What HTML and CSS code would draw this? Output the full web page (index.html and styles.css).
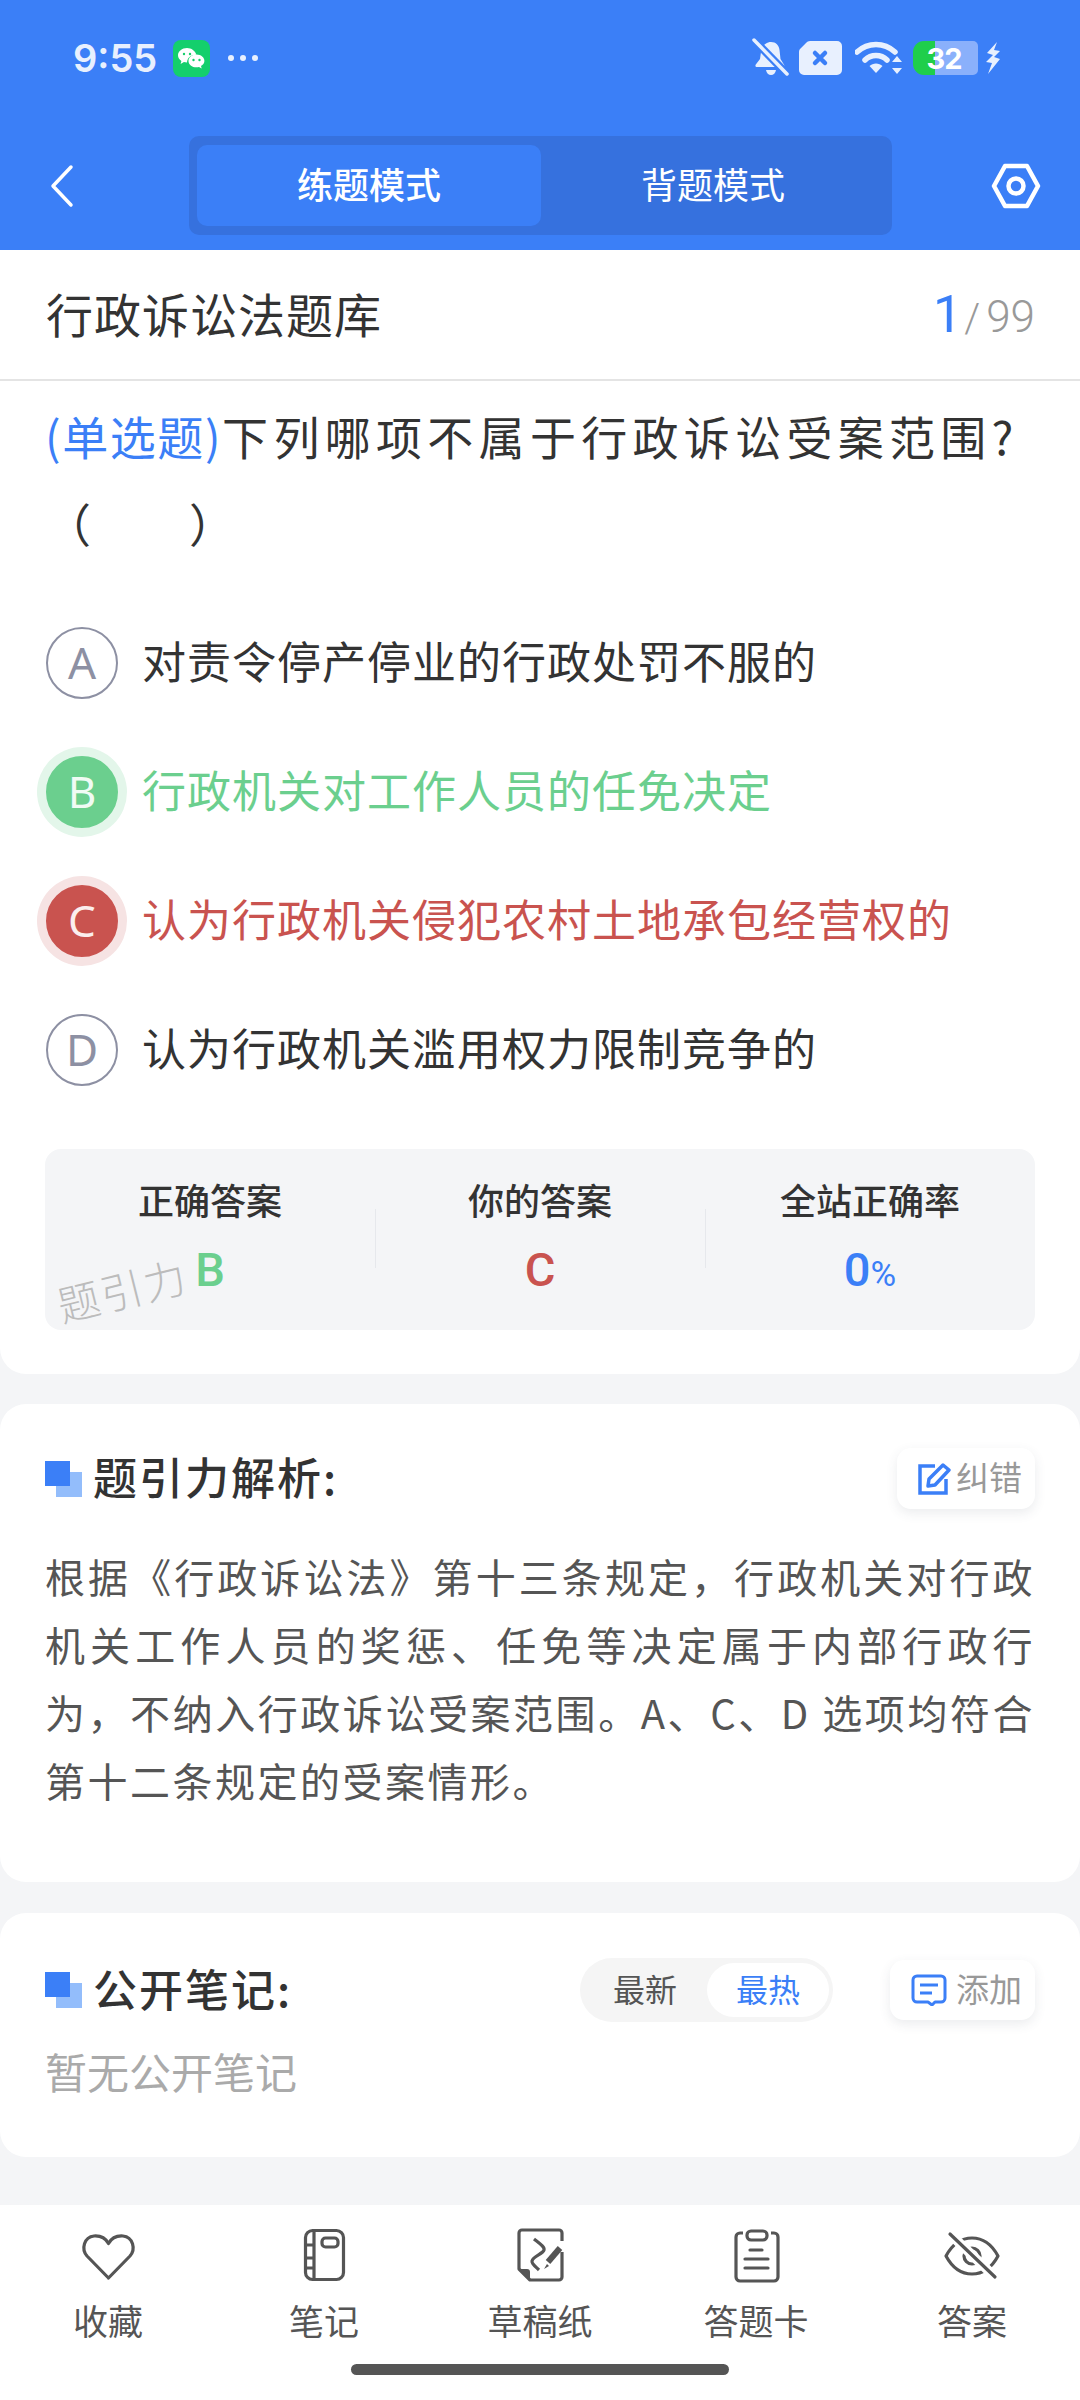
FILE: index.html
```html
<!DOCTYPE html>
<html lang="zh">
<head>
<meta charset="utf-8">
<title>行政诉讼法题库</title>
<link rel="stylesheet" href="styles.css">
</head>
<body>
<div class="page">
  <header class="top">
    <div class="status">
      <div class="status-left">
        <span class="time">9:55</span>
        <svg class="wechat" viewBox="0 0 37 37" width="37" height="37">
          <rect width="37" height="37" rx="8" fill="#14cf6c"/>
          <path d="M14 8c-5 0-9 3.300-9 7.300 0 2.400 1.400 4.300 3.400 5.600l-.8 3 3.300-1.800c1 .3 2 .4 3.100.4 0-4.500 3.900-7.800 9.300-7.800C22.300 10.900 18.500 8 14 8z" fill="#fff"/>
          <path d="M23.500 14.500c-4.600 0-8 2.900-8 6.400s3.400 6.400 8 6.400c.9 0 1.700-.1 2.500-.3l2.700 1.500-.7-2.500c1.900-1.200 3.400-2.900 3.400-5.100 0-3.500-3.400-6.400-7.900-6.400z" fill="#fff"/>
          <circle cx="20.500" cy="20" r="1.200" fill="#14cf6c"/><circle cx="26.500" cy="20" r="1.200" fill="#14cf6c"/>
          <circle cx="11" cy="14" r="1.200" fill="#14cf6c"/><circle cx="17" cy="14" r="1.200" fill="#14cf6c"/>
        </svg>
        <svg class="dots" viewBox="0 0 32 8" width="32" height="8"><circle cx="4" cy="4" r="3" fill="#e8f0fe"/><circle cx="16" cy="4" r="3" fill="#e8f0fe"/><circle cx="28" cy="4" r="3" fill="#e8f0fe"/></svg>
      </div>
      <div class="status-right">
        <svg viewBox="0 0 37 40" width="37" height="40">
          <path d="M19 4c5 0 8 3.500 8.500 8l1 9 4 6.500-2 1.500H5c-1.500 0-2-1.300-1.200-2.500L8 21l1-7C9.600 8 14 4 19 4z" fill="#e8f0fe"/>
          <path d="M14 32h10c-.5 3-2.500 5-5 5s-4.500-2-5-5z" fill="#e8f0fe"/>
          <path d="M1 1l35 36" stroke="#3b7ff7" stroke-width="8"/>
          <path d="M2 2l33 34" stroke="#e8f0fe" stroke-width="3.500" stroke-linecap="round"/>
        </svg>
        <svg viewBox="0 0 43 34" width="43" height="34">
          <path d="M11 0h27a5 5 0 0 1 5 5v24a5 5 0 0 1-5 5H5a5 5 0 0 1-5-5V11c0-1.500.5-2.500 1.500-3.500L7 2c1-1.300 2.500-2 4-2z" fill="#e8f0fe"/>
          <path d="M16 12l10 10M26 12L16 22" stroke="#3b7ff7" stroke-width="4.500" stroke-linecap="round"/>
        </svg>
        <svg class="wifi" viewBox="0 0 48 34" width="48" height="34">
          <path d="M2 11C13 1 29 1 40 11" fill="none" stroke="#e8f0fe" stroke-width="5.500" stroke-linecap="round"/>
          <path d="M10 19c6-6 16-6 22 0" fill="none" stroke="#e8f0fe" stroke-width="5.500" stroke-linecap="round"/>
          <path d="M14.500 25c3.500-3.500 9.500-3.500 13 0L21 32z" fill="#e8f0fe"/>
          <path d="M42 15l5 6H37zM42 33l5-6H37z" fill="#e8f0fe"/>
        </svg>
        <div class="battery"><span class="battery-num">32</span></div>
        <svg class="bolt" viewBox="0 0 16 32" width="16" height="32"><path d="M12 0L2 11l6 2-7 7 6 1-4 11 12-15-6-2 6-6-6-1z" fill="#e8f0fe"/></svg>
      </div>
    </div>
    <div class="nav">
      <svg class="back" viewBox="0 0 24 44" width="24" height="44"><path d="M21 3L3 22l18 19" fill="none" stroke="#fff" stroke-width="3.500" stroke-linecap="round" stroke-linejoin="round"/></svg>
      <div class="tabs">
        <div class="tab tab-on">练题模式</div>
        <div class="tab">背题模式</div>
      </div>
      <svg class="gear" viewBox="0 0 50 46" width="50" height="46">
        <path d="M14 3h22l11 20-11 20H14L3 23z" fill="none" stroke="#fff" stroke-width="4.500" stroke-linejoin="round"/>
        <circle cx="25" cy="23" r="7.500" fill="none" stroke="#fff" stroke-width="4.500"/>
      </svg>
    </div>
  </header>

  <section class="card card-question">
    <div class="bank">
      <span class="bank-name">行政诉讼法题库</span>
      <span class="count"><span class="count-cur">1</span><span class="count-sep">/</span><span class="count-all">99</span></span>
    </div>
    <p class="question"><span class="q-type">(单选题)</span>下列哪项不属于行政诉讼受案范围?<span class="blank">（　　）</span></p>
    <div class="options">
      <div class="option"><span class="mark">A</span><span class="option-text">对责令停产停业的行政处罚不服的</span></div>
      <div class="option option-right"><span class="mark">B</span><span class="option-text">行政机关对工作人员的任免决定</span></div>
      <div class="option option-wrong"><span class="mark">C</span><span class="option-text">认为行政机关侵犯农村土地承包经营权的</span></div>
      <div class="option"><span class="mark">D</span><span class="option-text">认为行政机关滥用权力限制竞争的</span></div>
    </div>
    <div class="stats">
      <div class="stat"><div class="stat-label">正确答案</div><div class="stat-value val-right">B</div></div>
      <div class="stat"><div class="stat-label">你的答案</div><div class="stat-value val-wrong">C</div></div>
      <div class="stat"><div class="stat-label">全站正确率</div><div class="stat-value val-rate">0<span class="pct">%</span></div></div>
      <span class="watermark">题引力</span>
    </div>
  </section>

  <section class="card card-analysis">
    <div class="sec-head">
      <div class="sec-title"><span class="sec-mark"></span><h2>题引力解析:</h2></div>
      <div class="chip chip-fix">
        <svg viewBox="0 0 34 34" width="34" height="34">
          <path d="M18 4H3v27h26V17" fill="none" stroke="#3b7ff7" stroke-width="3.500"/>
          <path d="M11 24l1-7L26 3l6 5-14 15z" fill="none" stroke="#3b7ff7" stroke-width="3.500" stroke-linejoin="round"/>
        </svg>
        <span class="chip-text">纠错</span>
      </div>
    </div>
    <p class="analysis">根据《行政诉讼法》第十三条规定，行政机关对行政机关工作人员的奖惩、任免等决定属于内部行政行为，不纳入行政诉讼受案范围。A、C、D 选项均符合第十二条规定的受案情形。</p>
  </section>

  <section class="card card-notes">
    <div class="sec-head">
      <div class="sec-title"><span class="sec-mark"></span><h2>公开笔记:</h2></div>
      <div class="sec-tools">
        <div class="toggle"><span class="toggle-item">最新</span><span class="toggle-item toggle-on">最热</span></div>
        <div class="chip chip-add">
          <svg viewBox="0 0 36 32" width="36" height="32">
            <path d="M6 2h24a4 4 0 0 1 4 4v18a4 4 0 0 1-4 4h-6l-3 3-4-3H6a4 4 0 0 1-4-4V6a4 4 0 0 1 4-4z" fill="none" stroke="#3b7ff7" stroke-width="3" stroke-linejoin="round"/>
            <path d="M9 11h18M9 19h12" stroke="#3b7ff7" stroke-width="3"/>
          </svg>
          <span class="chip-text">添加</span>
        </div>
      </div>
    </div>
    <p class="empty">暂无公开笔记</p>
  </section>

  <nav class="bottom">
    <div class="bottom-items">
      <div class="b-item">
        <svg viewBox="0 0 60 60" width="60" height="60"><path d="M30.500 53L9 31C3 24 6 12 16 11c7-.5 12 3 14.500 7.500C33 14 38 10.500 45 11c10 1 13 13 7 20z" class="ic"/></svg>
        <span>收藏</span>
      </div>
      <div class="b-item">
        <svg viewBox="0 0 60 60" width="60" height="60">
          <rect x="11.500" y="5.500" width="38" height="49" rx="7" class="ic"/>
          <path d="M20 5.500v49M11.500 20H20M11.500 33H20M11.500 43H20" class="ic"/>
          <rect x="28" y="13" width="16" height="9" rx="3.500" class="ic"/>
        </svg>
        <span>笔记</span>
      </div>
      <div class="b-item">
        <svg viewBox="0 0 60 60" width="60" height="60">
          <path d="M52 16V8a3 3 0 0 0-3-3H12a3 3 0 0 0-3 3v36l11 11h29a3 3 0 0 0 3-3V27" class="ic"/>
          <path d="M9 44h8a3 3 0 0 1 3 3v8z" fill="#555"/>
          <path d="M24 14c5 4 11 8 10 11-1 4-11 6-12 11-.5 3 4 6 7 9" class="ic"/>
          <path d="M50 23L38 37" fill="none" stroke="#555" stroke-width="6"/>
          <path d="M37 39l-3 5 5-3z" fill="#555"/>
        </svg>
        <span>草稿纸</span>
      </div>
      <div class="b-item">
        <svg viewBox="0 0 60 60" width="60" height="60">
          <path d="M17 8h-3a4 4 0 0 0-4 4v40a4 4 0 0 0 4 4h34a4 4 0 0 0 4-4V12a4 4 0 0 0-4-4h-3" class="ic"/>
          <rect x="21" y="6" width="20" height="9" rx="4" class="ic"/>
          <path d="M24 25h12M19 34h23M19 43h23" class="ic ic-round"/>
        </svg>
        <span>答题卡</span>
      </div>
      <div class="b-item">
        <svg viewBox="0 0 60 60" width="60" height="60">
          <path d="M4 31C11 18 21 13 30 13s19 5 26 18c-7 13-17 18-26 18S11 44 4 31z" class="ic"/>
          <circle cx="30" cy="31" r="8" class="ic"/>
          <path d="M8 9l45 43" fill="none" stroke="#fff" stroke-width="10"/>
          <path d="M8 9l45 43" class="ic ic-round"/>
        </svg>
        <span>答案</span>
      </div>
    </div>
    <div class="home-bar"></div>
  </nav>
</div>
</body>
</html>
```
FILE: styles.css
```css
* { box-sizing: border-box; }
html, body { margin: 0; padding: 0; }
body { font-family: "Noto Sans CJK SC", "Noto Sans", sans-serif; color: #333; }
h2, p { margin: 0; }
.page { width: 1080px; height: 2400px; display: flex; flex-direction: column; background: #f4f5f7; overflow: hidden; }

.top { height: 250px; background: #3b7ff7; flex: none; }
.status { height: 116px; display: flex; justify-content: space-between; align-items: center; padding: 0 79px 0 73px; }
.status-left { display: flex; align-items: center; }
.time { font-family: "Inter", sans-serif; font-weight: 600; font-size: 38px; color: #e8f0fe; width: 100px; }
.wechat { margin-right: 17px; }
.status-right { display: flex; align-items: center; gap: 10px; }
.wifi { margin-left: 3px; }
.bolt { margin-left: -3px; }
.battery { width: 65px; height: 34px; border-radius: 11px 5px 5px 11px; background: linear-gradient(90deg, #1fce4b 22px, #8ab0fb 22px); display: flex; align-items: center; justify-content: center; padding-right: 3px; }
.battery-num { font-family: "Inter", sans-serif; font-weight: 700; font-size: 29px; color: #fff; letter-spacing: -1px; }

.nav { display: flex; align-items: center; height: 99px; margin-top: 20px; padding-left: 50px; }
.back { margin-right: 115px; }
.tabs { width: 703px; height: 99px; padding: 9px 7px 9px 8px; background: #3671de; border-radius: 10px; display: flex; }
.tab { width: 344px; height: 81px; display: flex; align-items: center; justify-content: center; font-size: 36px; color: #fff; border-radius: 10px; padding-bottom: 5px; }
.tab-on { background: #3b7ff7; font-weight: 500; }
.gear { margin-left: 99px; }

.card { background: #fff; flex: none; }
.card-question { height: 1124px; border-radius: 0 0 26px 26px; }
.bank { height: 131px; border-bottom: 2px solid #e4e4e4; display: flex; justify-content: space-between; align-items: center; padding: 0 45px 0 46px; }
.bank-name { font-size: 47px; color: #333; letter-spacing: 1px; padding-bottom: 4px; }
.count { font-family: "Roboto", sans-serif; font-weight: 300; display: flex; align-items: baseline; }
.count-cur { font-size: 52px; color: #3b7ff7; font-weight: 400; }
.count-sep { font-size: 40px; color: #999; margin: 0 6px 0 2px; }
.count-all { font-size: 44px; color: #999; }

.question { margin-top: 11px; padding: 0 45px; font-size: 46px; line-height: 87px; letter-spacing: 5.300px; color: #333; height: 173px; }
.q-type { color: #3b7ff7; letter-spacing: 1.600px; margin-right: 0; }
.blank { white-space: nowrap; letter-spacing: 2px; }

.options { margin-top: 33px; }
.option { height: 129px; display: flex; align-items: center; padding-left: 46px; gap: 24px; font-size: 44px; letter-spacing: 1px; }
.option-text { padding-bottom: 6px; }
.mark { width: 72px; height: 72px; border-radius: 50%; border: 2px solid #8d90a3; color: #8d90a3; font-family: "Noto Sans", sans-serif; font-weight: 400; font-size: 44px; letter-spacing: 0; display: flex; align-items: center; justify-content: center; flex: none; padding-bottom: 2px; }
.option-right .mark { background: #6bcf8e; border-color: #6bcf8e; color: #f0fbf4; box-shadow: 0 0 0 9px #e3f6ea; }
.option-right .option-text { color: #6bcf8e; }
.option-wrong .mark { background: #c9534f; border-color: #c9534f; color: #fbeeee; box-shadow: 0 0 0 9px #f6e3e3; }
.option-wrong .option-text { color: #c9534f; }

.stats { position: relative; margin: 35px 45px 0; height: 181px; background: #f4f5f7; border-radius: 16px; display: grid; grid-template-columns: repeat(3, 1fr); }
.stat { text-align: center; position: relative; padding-top: 28px; }
.stat + .stat::before { content: ""; position: absolute; left: 0; top: 60px; height: 59px; width: 1px; background: #e6e8ec; }
.stat-label { font-size: 36px; line-height: 44px; font-weight: 500; color: #333; }
.stat-value { font-family: "Roboto", sans-serif; font-size: 47px; line-height: 56px; margin-top: 21px; font-weight: 500; }
.val-right { color: #6bcf8e; }
.val-wrong { color: #c9534f; }
.val-rate { color: #3b7ff7; }
.pct { font-size: 35px; font-weight: 400; }
.watermark { position: absolute; left: 11px; top: 110px; font-size: 42px; line-height: 60px; letter-spacing: 2px; color: #bcbcbc; font-weight: 300; transform: rotate(-14deg); }

.sec-head { display: flex; justify-content: space-between; align-items: center; }
.sec-title { display: flex; align-items: center; }
.sec-title h2 { font-size: 44px; letter-spacing: 2px; font-weight: 500; color: #333; line-height: 60px; padding-bottom: 5px; height: 60px; display: flex; align-items: center; }
.sec-mark { width: 37px; height: 36px; margin-right: 11px; background: linear-gradient(#3b7ff7, #3b7ff7) 0 0 / 25px 25px no-repeat, linear-gradient(#93bdfb, #93bdfb) 11px 11px / 26px 25px no-repeat; }
.chip { display: flex; align-items: center; background: #fff; border-radius: 14px; box-shadow: 0 4px 12px rgba(60, 70, 90, .1); font-size: 33px; color: #999; }
.chip-text { padding-bottom: 5px; }
.chip-fix { width: 138px; height: 61px; padding-left: 20px; gap: 5px; }
.chip-add { width: 145px; height: 60px; padding-left: 21px; gap: 9px; }

.card-analysis { margin-top: 30px; height: 478px; border-radius: 26px; padding: 44px 45px 0 45px; }
.analysis { margin-top: 33px; font-size: 40px; line-height: 68px; letter-spacing: 2.500px; color: #555; text-align: justify; }

.card-notes { margin-top: 31px; height: 244px; border-radius: 26px; padding: 45px 45px 0 45px; }
.sec-tools { display: flex; align-items: center; gap: 57px; }
.toggle { width: 253px; height: 64px; border-radius: 32px; background: #f5f5f5; display: flex; align-items: center; padding: 0 4px 0 0; justify-content: space-between; font-size: 32px; color: #555; }
.toggle-item { padding-left: 33px; padding-bottom: 4px; }
.toggle-on { width: 122px; height: 54px; border-radius: 27px; background: #fff; color: #3b7ff7; display: flex; align-items: center; justify-content: center; padding: 0 0 4px; }
.empty { margin-top: 21px; font-size: 42px; line-height: 56px; color: #aaa; }

.bottom { margin-top: auto; height: 195px; background: #fff; flex: none; padding-top: 20px; }
.bottom-items { display: grid; grid-template-columns: repeat(5, 1fr); }
.b-item { display: flex; flex-direction: column; align-items: center; }
.b-item svg { display: block; }
.b-item span { margin-top: 11px; font-size: 35px; line-height: 48px; color: #555; }
.ic { fill: none; stroke: #555; stroke-width: 3.2; stroke-linejoin: round; }
.ic-round { stroke-linecap: round; }
.home-bar { width: 378px; height: 11px; border-radius: 6px; background: #555; margin: 20px auto 0; }
```
